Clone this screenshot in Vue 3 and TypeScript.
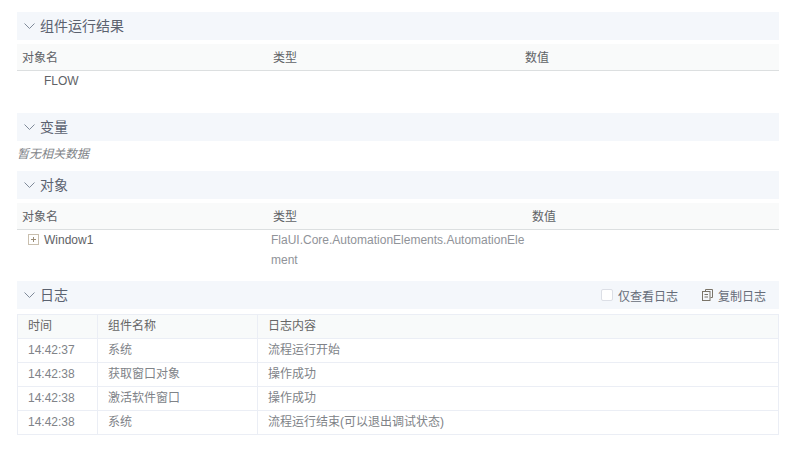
<script setup lang="ts">
interface Log { time: string; name: string; text: string }
const logs: Log[] = [
  { time: '14:42:37', name: '系统', text: '流程运行开始' },
  { time: '14:42:38', name: '获取窗口对象', text: '操作成功' },
  { time: '14:42:38', name: '激活软件窗口', text: '操作成功' },
  { time: '14:42:38', name: '系统', text: '流程运行结束(可以退出调试状态)' },
]
</script>

<template>
  <main class="page">
    <section>
      <header class="bar">
        <svg class="chev" viewBox="0 0 11 6"><path d="M.5.5l5 5 5-5" /></svg>
        <span class="title">组件运行结果</span>
      </header>
      <div class="vars-head one">
        <span>对象名</span><span>类型</span><span>数值</span>
      </div>
      <div class="flow-row">FLOW</div>
    </section>

    <section class="s2">
      <header class="bar">
        <svg class="chev" viewBox="0 0 11 6"><path d="M.5.5l5 5 5-5" /></svg>
        <span class="title">变量</span>
      </header>
      <p class="empty">暂无相关数据</p>
    </section>

    <section class="s3">
      <header class="bar">
        <svg class="chev" viewBox="0 0 11 6"><path d="M.5.5l5 5 5-5" /></svg>
        <span class="title">对象</span>
      </header>
      <div class="vars-head two">
        <span>对象名</span><span>类型</span><span>数值</span>
      </div>
      <div class="obj-row">
        <div class="obj-name">
          <svg class="plus" viewBox="0 0 11 11">
            <rect x=".5" y=".5" width="10" height="10" />
            <path d="M3 5.5h5M5.5 3v5" />
          </svg>
          <span>Window1</span>
        </div>
        <div class="obj-type">FlaUI.Core.AutomationElements.AutomationElement</div>
      </div>
    </section>

    <section class="s4">
      <header class="bar">
        <svg class="chev" viewBox="0 0 11 6"><path d="M.5.5l5 5 5-5" /></svg>
        <span class="title">日志</span>
        <div class="tools">
          <label class="check"><i class="box"></i>仅查看日志</label>
          <span class="copy">
            <svg class="copy-icon" viewBox="0 0 11 12">
              <path d="M3.5 2.5V.5h7v8H8.500" />
              <rect x=".5" y="2.500" width="7.500" height="9" />
              <path d="M2.500 5.500h3.500M2.500 8h3.500" />
            </svg>
            复制日志
          </span>
        </div>
      </header>
      <table class="log">
        <colgroup><col class="c1" /><col class="c2" /><col /></colgroup>
        <thead>
          <tr><th>时间</th><th>组件名称</th><th>日志内容</th></tr>
        </thead>
        <tbody>
          <tr v-for="(l, i) in logs" :key="i">
            <td>{{ l.time }}</td><td>{{ l.name }}</td><td>{{ l.text }}</td>
          </tr>
        </tbody>
      </table>
    </section>
  </main>
</template>

<style scoped>
.page {
  width: 762px;
  margin-left: 17px;
  padding-top: 12px;
  font-family: "Liberation Sans", "Noto Sans CJK SC", sans-serif;
  font-size: 12px;
  color: #606266;
}
.bar {
  height: 28px;
  display: flex;
  align-items: center;
  background: #f4f7fb;
  padding-left: 7px;
}
.chev {
  width: 11px;
  height: 6px;
  fill: none;
  stroke: #7f8a99;
  stroke-width: 1;
  margin-right: 5px;
  flex: none;
}
.title {
  font-size: 14px;
  color: #5b6270;
  line-height: 28px;
}
.vars-head {
  margin-top: 4px;
  height: 26px;
  line-height: 28px;
  background: #f9fafa;
  border-bottom: 1px solid #dcdfe0;
  display: grid;
  color: #606266;
  padding-left: 5px;
}
.vars-head.one { grid-template-columns: 251px 252px 1fr; }
.vars-head.two { grid-template-columns: 251px 259px 1fr; }
.flow-row {
  height: 42px;
  line-height: 20px;
  padding-left: 27px;
}
.empty {
  margin: 0;
  height: 30px;
  line-height: 26px;
  font-style: italic;
  color: #808388;
}
.obj-row {
  height: 51px;
  display: flex;
  line-height: 20px;
}
.obj-name {
  width: 254px;
  padding-left: 11px;
  display: flex;
  align-items: flex-start;
  flex: none;
  box-sizing: border-box;
}
.plus {
  width: 11px;
  height: 11px;
  margin: 4px 5px 0 0;
  fill: none;
  stroke: #c9bfae;
  stroke-width: 1;
  flex: none;
}
.plus path { stroke: #9a8c76; }
.obj-type {
  width: 254px;
  color: #909399;
  word-break: break-all;
}
.tools {
  margin-left: auto;
  display: flex;
  align-items: center;
  padding-right: 13px;
  color: #666c78;
}
.check {
  display: flex;
  align-items: center;
  margin-right: 24px;
}
.box {
  width: 10px;
  height: 10px;
  border: 1px solid #dcdfe6;
  background: #fff;
  border-radius: 2px;
  margin-right: 5px;
}
.copy {
  display: flex;
  align-items: center;
  gap: 5px;
}
.copy-icon {
  width: 11px;
  height: 12px;
  fill: none;
  stroke: #7a7468;
  stroke-width: 1;
}
.log {
  margin-top: 5px;
  width: 100%;
  border-collapse: collapse;
  table-layout: fixed;
  border: 1px solid #ebeef5;
}
.c1 { width: 80px; }
.c2 { width: 160px; }
.log th, .log td {
  height: 23px;
  padding: 0 0 0 10px;
  border: 1px solid #ebeef5;
  text-align: left;
  font-weight: 400;
  line-height: 23px;
}
.log th { background: #f8fafa; color: #666; }
.log td { color: #808388; }
</style>
